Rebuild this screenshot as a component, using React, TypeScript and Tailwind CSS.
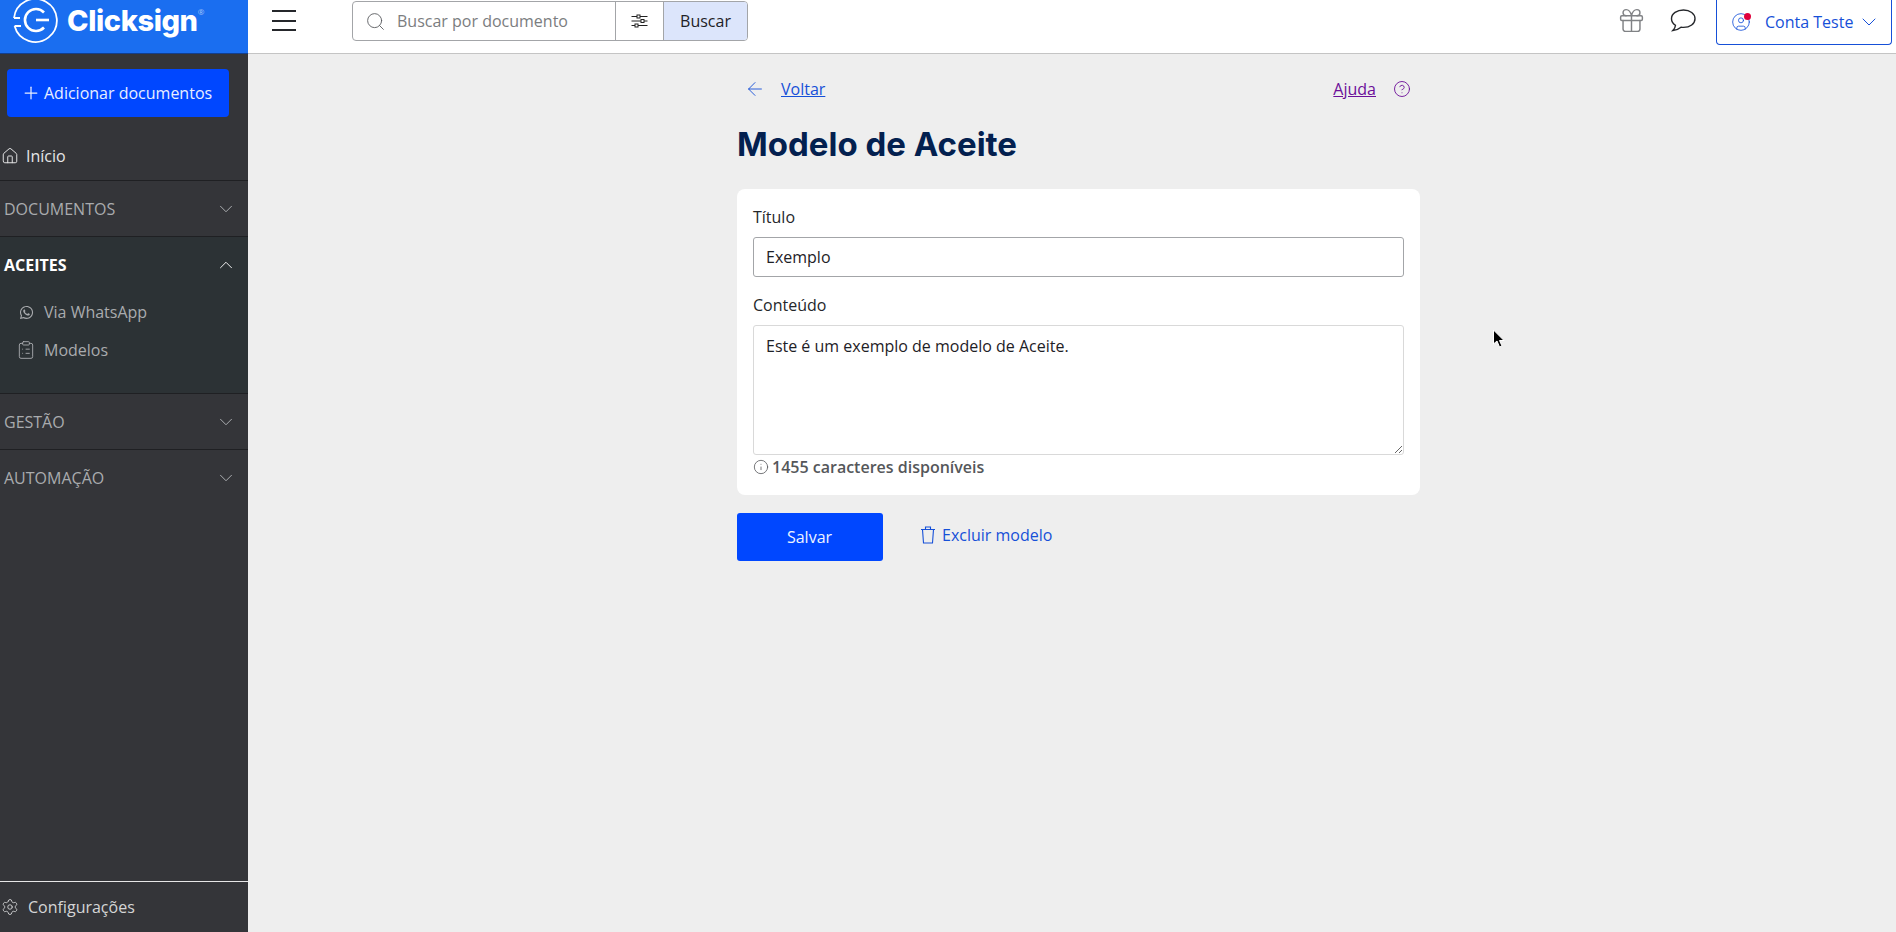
import React from "react";
import {
  ArrowLeft,
  ChevronDown,
  ChevronUp,
  CircleHelp,
  CircleUser,
  ClipboardList,
  Gift,
  House,
  Info,
  Plus,
  Search,
  Settings,
} from "lucide-react";
import { FaWhatsapp } from "react-icons/fa";

const Logo: React.FC = () => (
  <div className="flex h-[54px] w-[248px] shrink-0 items-start overflow-hidden border-b border-[#123f8f] bg-[#1a6ef0] pl-[11px]">
    <svg width="48" height="48" viewBox="0 0 48 48" fill="none" stroke="white" strokeWidth="1.8" className="-mt-[4px] shrink-0">
      <path d="M3 22A21.500 21.500 0 1 1 3.600 30" />
      <path d="M3 22H9M3.600 30H10" />
      <path d="M33 16.500A11 11 0 1 0 33 31.500" strokeWidth="2.600" />
      <path d="M25 24H38" strokeWidth="2.600" />
    </svg>
    <span className="mt-[6px] ml-[8px] font-['Inter',sans-serif] text-[29px] leading-[30px] font-extrabold tracking-[-0.4px] text-white">
      Clicksign
    </span>
    <span className="mt-[8px] text-[8px] leading-none text-white/60">®</span>
  </div>
);

const SectionRow: React.FC<{ label: string; open?: boolean }> = ({ label, open }) => (
  <div className={`flex h-[55px] items-center justify-between pr-[11px] pl-1 text-[16px] ${open ? "font-bold text-white" : "text-[#a9abae]"}`}>
    <span>{label}</span>
    {open ? (
      <ChevronUp size={22} strokeWidth={1} className="text-white" />
    ) : (
      <ChevronDown size={22} strokeWidth={1} className="text-[#b5b7ba]" />
    )}
  </div>
);

const Sidebar: React.FC = () => (
  <aside className="flex w-[248px] shrink-0 flex-col bg-[#343539]">
    <div className="px-[7px] pt-[15px]">
      <button className="flex h-[48px] w-[222px] items-center rounded-[4px] bg-[#0047ff] pl-[14px] text-[16px] text-[#e8eeff]">
        <Plus size={20} strokeWidth={1.5} className="mr-[3px]" />
        Adicionar documentos
      </button>
    </div>
    <div className="mt-[16px] flex h-[48px] items-center border-b border-[#1f2023] pb-[1px] pl-px text-[16px] text-[#e6e6e7]">
      <House size={18} strokeWidth={1.3} className="mr-[7px]" />
      Início
    </div>
    <div className="border-b border-[#1f2023]">
      <SectionRow label="DOCUMENTOS" />
    </div>
    <div className="h-[157px] border-b border-[#1f2023] bg-[#2c3235]">
      <SectionRow label="ACEITES" open />
      <div className="mt-[1px] flex h-[38px] items-center pl-[19px] text-[16px] text-[#a9abae]">
        <FaWhatsapp size={15} className="mr-[10px]" />
        Via WhatsApp
      </div>
      <div className="flex h-[38px] items-center pl-[16px] text-[16px] text-[#a9abae]">
        <ClipboardList size={20} strokeWidth={1.1} className="mr-[8px]" />
        Modelos
      </div>
    </div>
    <div className="border-b border-[#1f2023]">
      <SectionRow label="GESTÃO" />
    </div>
    <SectionRow label="AUTOMAÇÃO" />
    <div className="mt-auto flex h-[51px] items-center border-t border-[#e6e6e7] pl-px text-[16px] text-[#d4d5d6]">
      <Settings size={18} strokeWidth={1.2} className="mr-[9px]" />
      Configurações
    </div>
  </aside>
);

const SearchBar: React.FC = () => (
  <div className="mt-[1px] ml-[56px] flex h-[40px] w-[396px] overflow-hidden rounded-[4px] border border-[#a3a5a8] text-[16px]">
    <div className="flex w-[262px] items-center pl-[12px] text-[#7b7d80]">
      <Search size={21} strokeWidth={1} className="mr-[11px] text-[#55575a]" />
      Buscar por documento
    </div>
    <div className="flex w-[49px] items-center justify-center border-x border-[#a3a5a8]">
      <svg width="17" height="14" viewBox="0 0 17 14" fill="none" stroke="#222" strokeWidth="1">
        <path d="M0.500 2.500H6M9 2.500H16.500M0.500 7H10M13 7H16.500M0.500 11.500H4M7 11.500H16.500" />
        <rect x="6" y="1" width="3" height="3" />
        <rect x="10" y="5.500" width="3" height="3" />
        <rect x="4" y="10" width="3" height="3" />
      </svg>
    </div>
    <div className="flex flex-1 items-center justify-center bg-[#dce5fb] text-[#1e2126]">Buscar</div>
  </div>
);

const Topbar: React.FC = () => (
  <header className="flex h-[54px] items-start border-b border-[#c4c4c4] bg-white pl-[24px]">
    <div className="mt-[10px] flex w-[24px] flex-col gap-[7.5px]">
      <span className="h-[2px] bg-[#25272b]" />
      <span className="h-[2px] bg-[#25272b]" />
      <span className="h-[2px] bg-[#25272b]" />
    </div>
    <SearchBar />
    <div className="mr-[4px] ml-auto flex items-start">
      <Gift size={29} strokeWidth={1.2} className="mt-[6px] text-[#808285]" />
      <svg width="26" height="23" viewBox="0 0 26 23" fill="none" stroke="#25272b" strokeWidth="1.4" className="mt-[9px] ml-[24px]">
        <path d="M13.500 1C7 1 1.500 4.600 1.500 9.700C1.500 12.500 3.100 14.800 5.500 16.300C5.400 18.300 4.300 20 2.800 21.500C6 21.200 9 19.900 11 18.200C11.800 18.300 12.600 18.400 13.500 18.400C20 18.400 25 14.800 25 9.700C25 4.600 20 1 13.500 1Z" />
      </svg>
      <div className="relative ml-[20px] flex h-[45px] w-[176px] items-center rounded-b-[4px] border border-t-0 border-[#1650d8] pl-[14px] text-[16px] text-[#1650d8]">
        <CircleUser size={20} strokeWidth={1} />
        <span className="absolute top-[13px] left-[27px] h-[7px] w-[7px] rounded-full bg-[#e0003c]" />
        <span className="ml-[14px]">Conta Teste</span>
        <ChevronDown size={24} strokeWidth={1} className="ml-[4px]" />
      </div>
    </div>
  </header>
);

const ModelForm: React.FC = () => (
  <div className="mt-[15px] ml-[489px] w-[683px]">
    <div className="flex h-[40px] items-center justify-between pr-[9px] pl-[7px] text-[16px]">
      <div className="flex items-center text-[#1650d8]">
        <ArrowLeft size={22} strokeWidth={1} className="mr-[15px]" />
        <span className="underline">Voltar</span>
      </div>
      <div className="flex items-center text-[#6c0f99]">
        <span className="underline">Ajuda</span>
        <CircleHelp size={18} strokeWidth={1.2} className="ml-[17px]" />
      </div>
    </div>
    <h1 className="mt-[11px] h-[69px] font-['Inter',sans-serif] text-[33px] leading-[48px] font-bold text-[#03204f]">
      Modelo de Aceite
    </h1>
    <div className="h-[306px] rounded-[8px] bg-white px-[16px] pt-[16px] text-[16px] text-[#25272b]">
      <label className="block h-[32px] leading-[25px]">Título</label>
      <div className="flex h-[40px] items-center rounded-[3px] border border-[#a3a5a8] pl-[12px] text-[#1e2126]">Exemplo</div>
      <label className="mt-[16px] block h-[32px] leading-[25px]">Conteúdo</label>
      <textarea
        readOnly
        value="Este é um exemplo de modelo de Aceite."
        className="block h-[130px] w-full rounded-[3px] border border-[#d9d9d9] px-[12px] py-[8px] text-[16px] leading-[24px] text-[#1e2126] outline-none"
      />
      <div className="flex h-[24px] items-center text-[16px] font-semibold text-[#55575a]">
        <Info size={16} strokeWidth={1.2} className="mr-[3px]" />
        1455 caracteres disponíveis
      </div>
    </div>
    <div className="mt-[18px] flex items-start">
      <button className="h-[48px] w-[146px] rounded-[3px] bg-[#0047ff] pr-[1px] text-[16px] text-[#eef3ff]">Salvar</button>
      <div className="mt-[10px] ml-[37px] flex h-[24px] items-center text-[16px] text-[#1650d8]">
        <svg width="16" height="18" viewBox="0 0 16 18" fill="none" stroke="currentColor" strokeWidth="1.1" className="mr-[6px]">
          <path d="M1 3.500H15M5.500 3.500V1H10.500V3.500M2.500 3.500L3.500 17H12.500L13.500 3.500" />
        </svg>
        Excluir modelo
      </div>
    </div>
  </div>
);

const App: React.FC = () => {
  return (
    <div className="relative flex h-screen flex-col overflow-hidden bg-[#eeeeee] font-['Open_Sans',sans-serif]">
      <div className="flex h-[54px] shrink-0">
        <Logo />
        <div className="flex-1">
          <Topbar />
        </div>
      </div>
      <div className="flex min-h-0 flex-1">
        <Sidebar />
        <main className="flex-1">
          <ModelForm />
        </main>
      </div>
      <svg width="14" height="20" viewBox="0 0 14 20" className="absolute top-[329px] left-[1492px]">
        <path d="M1.500 1V15L5 12L7.500 18L10 17L7.500 11.500H12Z" fill="#000" stroke="#fff" strokeWidth="1" />
      </svg>
    </div>
  );
};

export default App;
